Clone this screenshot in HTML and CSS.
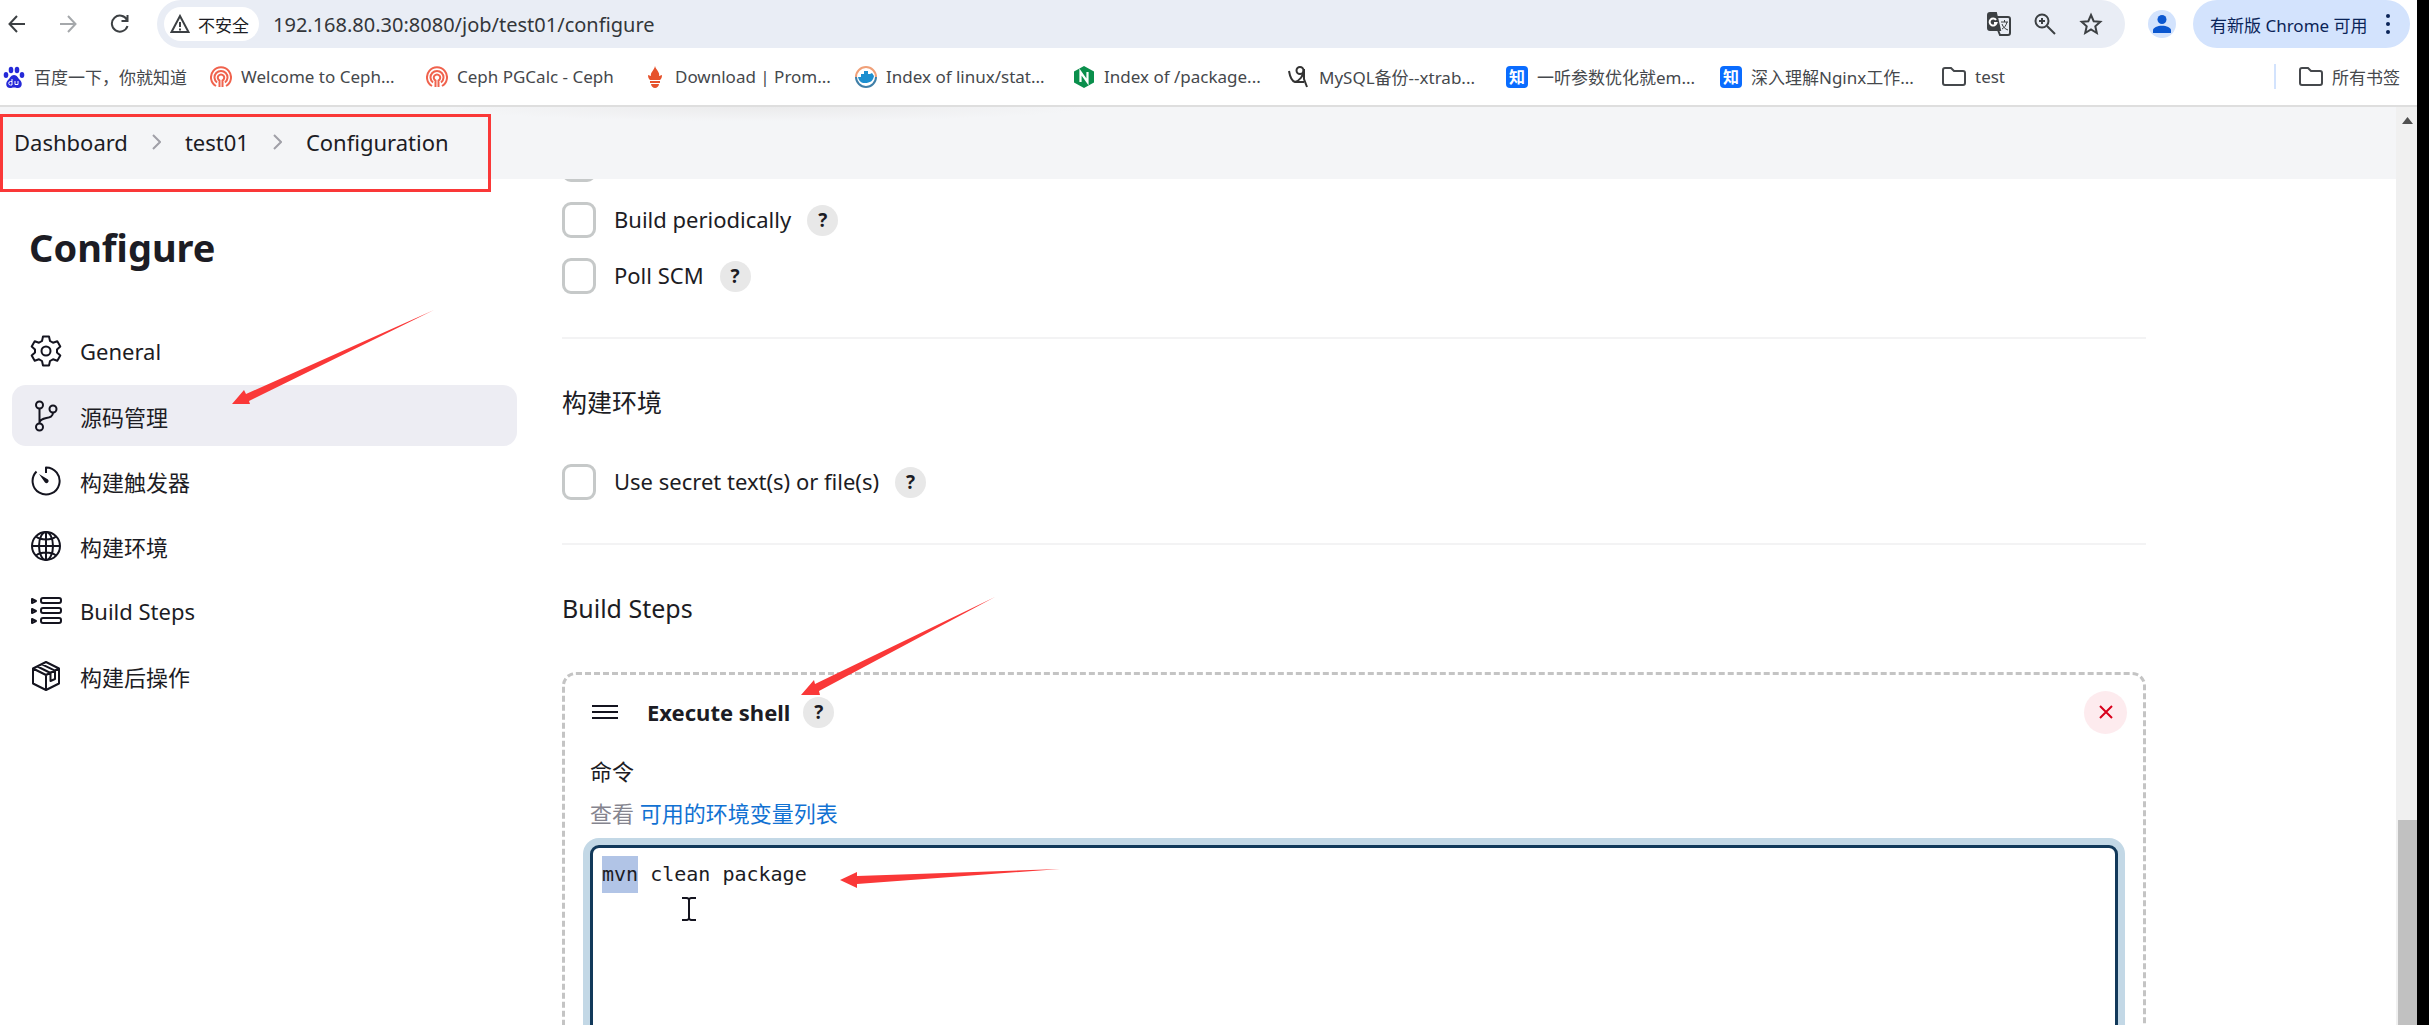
FILE: index.html
```
<!DOCTYPE html>
<html lang="zh-CN">
<head>
    <meta charset="UTF-8">
    <meta name="viewport" content="width=device-width, initial-scale=1.0">
    <title>test01 Config [Jenkins]</title>
    <link rel="stylesheet" href="styles.css">
</head>
<body>
    <div class="window">
        <header class="toolbar">
            <div class="nav">
                <button class="iconBtn" aria-label="Back"><svg width="18" height="20" viewBox="0 0 18 20"><path d="M9 2 1.500 10 9 18M2 10h15" /></svg></button>
                <button class="iconBtn forward" aria-label="Forward"><svg width="18" height="20" viewBox="0 0 18 20"><path d="M9 2l7.500 8L9 18M1 10h15" /></svg></button>
                <button class="iconBtn" aria-label="Reload"><svg width="20" height="20" viewBox="0 0 20 20"><path d="M17 6A8 8 0 1 0 17.500 12M17.500 1v6h-6" /></svg></button>
            </div>
            <div class="omnibox">
                <button class="security">
                    <svg width="20" height="20" viewBox="0 0 20 20"><path d="M10 2 1.500 18h17zM10 8v5M10 14.500v2" /></svg>
                    不安全
                </button>
                <input class="url" type="text" aria-label="URL" value="192.168.80.30:8080/job/test01/configure">
                <button class="iconBtn" aria-label="Translate">
                    <svg width="24" height="24" viewBox="0 0 24 24"><path d="M9 5h12a2 2 0 0 1 2 2v14a2 2 0 0 1-2 2h-8l-2-5" /><path class="solid" d="M3 1h6l4 17H3a2 2 0 0 1-2-2V3a2 2 0 0 1 2-2z" /><path class="light" d="M9 8a3.500 3.500 0 1 0 .5 3H7" /><path class="thin" d="M14 10h7M17.500 8v2M20 10c-1 4-3 6-5 7M15 12c1 3 3 5 6 6" /></svg>
                </button>
                <button class="iconBtn" aria-label="Zoom">
                    <svg width="22" height="22" viewBox="0 0 22 22"><circle cx="8" cy="8" r="6.500" /><path d="M13 13l8 8M8 5v6M5 8h6" /></svg>
                </button>
                <button class="iconBtn" aria-label="Bookmark">
                    <svg width="24" height="24" viewBox="0 0 24 24"><path d="M12 3l2.700 6.200 6.600.6-5 4.500 1.500 6.700-5.800-3.500L6.200 21l1.500-6.700-5-4.500 6.600-.6z" /></svg>
                </button>
            </div>
            <button class="profile" aria-label="Profile">
                <svg width="18" height="18" viewBox="0 0 20 20"><circle cx="10" cy="5" r="5" /><path d="M0 20v-3c0-3 5-5 10-5s10 2 10 5v3z" /></svg>
            </button>
            <button class="update">
                有新版 Chrome 可用
                <svg width="6" height="20" viewBox="0 0 6 20"><circle cx="3" cy="2" r="2" /><circle cx="3" cy="10" r="2" /><circle cx="3" cy="18" r="2" /></svg>
            </button>
        </header>

        <nav class="bookmarks">
            <a href="#">
                <svg width="22" height="22" viewBox="0 0 22 22" fill="#2529d8"><ellipse cx="3" cy="9" rx="2.300" ry="3" /><ellipse cx="8" cy="4" rx="2.300" ry="3.200" /><ellipse cx="14" cy="4" rx="2.300" ry="3.200" /><ellipse cx="19" cy="9" rx="2.300" ry="3" /><path d="M11 9c3 0 4 3 6 5 3 3 2 8-2 8-2 0-2-.5-4-.5s-2 .5-4 .5c-4 0-5-5-2-8 2-2 3-5 6-5z" /><path d="M9 13v6H7.500a1.500 1.500 0 0 1 0-3.500H9M12 15v3.500h3V15" fill="none" stroke="#fff" /></svg>
                <span>百度一下，你就知道</span>
            </a>
            <a href="#">
                <svg class="ceph" width="22" height="22" viewBox="0 0 22 22"><path d="M6 20a10 10 0 1 1 10 0M7 16.500a6.500 6.500 0 1 1 8 0M9.500 21v-6.500a3.200 3.200 0 1 1 3 0V21" /></svg>
                <span>Welcome to Ceph...</span>
            </a>
            <a href="#">
                <svg class="ceph" width="22" height="22" viewBox="0 0 22 22"><path d="M6 20a10 10 0 1 1 10 0M7 16.500a6.500 6.500 0 1 1 8 0M9.500 21v-6.500a3.200 3.200 0 1 1 3 0V21" /></svg>
                <span>Ceph PGCalc - Ceph</span>
            </a>
            <a href="#">
                <svg width="22" height="22" viewBox="0 0 22 22" fill="#e6522c"><path d="M11 0c1 4 5 6 4 10l3-1c0 3-1 4-2 5H6c-1-1-2-2-2-5l3 1C6 6 10 5 11 0zM6 15h10v2H6zM7 18h8c0 2-2 4-4 4s-4-2-4-4z" /></svg>
                <span>Download | Prom...</span>
            </a>
            <a href="#">
                <svg width="22" height="22" viewBox="0 0 22 22" fill="none" stroke-width="2"><path d="M1 11a10 10 0 0 1 20 0" stroke="#f0a078" /><path d="M1 11a10 10 0 0 0 20 0" stroke="#3f7fa8" /><path d="M3 11h3V8h3V5h4v3h2l2-1 2 3c-1 5-4 7-9 7-4 0-6-2-7-6z" fill="#1d8fd0" /></svg>
                <span>Index of linux/stat...</span>
            </a>
            <a href="#">
                <svg width="22" height="22" viewBox="0 0 22 22"><path d="M11 0l10 5.500v11L11 22 1 16.500v-11z" fill="#0a8f4c" /><path d="M7.500 16V6l7 10V6" fill="none" stroke="#fff" stroke-width="2.200" /></svg>
                <span>Index of /package...</span>
            </a>
            <a href="#">
                <svg width="22" height="22" viewBox="0 0 22 22" fill="none" stroke="#333" stroke-width="2"><circle cx="12" cy="4.500" r="3.500" /><path d="M1 5c1 6 3 10 6 11 4-1 9-6 9-13v10l3 8M7 16h9" /></svg>
                <span>MySQL备份--xtrab...</span>
            </a>
            <a href="#">
                <b class="zhihu">知</b>
                <span>一听参数优化就em...</span>
            </a>
            <a href="#">
                <b class="zhihu">知</b>
                <span>深入理解Nginx工作...</span>
            </a>
            <a href="#">
                <svg class="folder" width="24" height="20" viewBox="0 0 24 20"><path d="M1 3a2 2 0 0 1 2-2h6l3 3h9a2 2 0 0 1 2 2v10a2 2 0 0 1-2 2H3a2 2 0 0 1-2-2z" /></svg>
                <span>test</span>
            </a>
            <a href="#" class="allMarks">
                <svg class="folder" width="24" height="20" viewBox="0 0 24 20"><path d="M1 3a2 2 0 0 1 2-2h6l3 3h9a2 2 0 0 1 2 2v10a2 2 0 0 1-2 2H3a2 2 0 0 1-2-2z" /></svg>
                <span>所有书签</span>
            </a>
        </nav>

        <div class="viewport">
            <div class="page">
                <nav class="breadcrumbs">
                    <a href="#">Dashboard</a>
                    <svg width="9" height="16" viewBox="0 0 9 16"><path d="M1 1l7 7-7 7" /></svg>
                    <a href="#">test01</a>
                    <svg width="9" height="16" viewBox="0 0 9 16"><path d="M1 1l7 7-7 7" /></svg>
                    <a href="#">Configuration</a>
                </nav>
                <div class="redBox"></div>

                <div class="columns">
                    <aside class="sidebar">
                        <h1>Configure</h1>
                        <a href="#" class="task">
                            <svg width="32" height="32" viewBox="0 0 32 32"><path d="M13 1.500h6l1 4.500 3 1.700 4.300-1.400 3 5.200-3.300 3v3l3.300 3-3 5.200L23 24.300 20 26l-1 4.500h-6L12 26l-3-1.700-4.300 1.400-3-5.200 3.300-3v-3l-3.300-3 3-5.200L9 7.700 12 6z" /><circle cx="16" cy="16" r="4.500" /></svg>
                            General
                        </a>
                        <a href="#" class="task active">
                            <svg width="32" height="32" viewBox="0 0 32 32"><circle cx="9.500" cy="5" r="3.500" /><circle cx="23" cy="9" r="3.500" /><circle cx="9.500" cy="27" r="3.500" /><path d="M9.500 8.500v15M23 12.500c0 8-12 3-13.500 10" /></svg>
                            源码管理
                        </a>
                        <a href="#" class="task">
                            <svg width="32" height="32" viewBox="0 0 32 32"><path d="M16 8V2.500a13.500 13.500 0 1 1-9.500 4" /><path class="solid" d="M9 9l9 5.500a2 2 0 0 1-3 3z" /></svg>
                            构建触发器
                        </a>
                        <a href="#" class="task">
                            <svg width="32" height="32" viewBox="0 0 32 32"><circle cx="16" cy="16" r="14" /><ellipse cx="16" cy="16" rx="7" ry="14" /><path d="M16 2v28M2 16h28M6 6.500c5 4 15 4 20 0M6 25.500c5-4 15-4 20 0" /></svg>
                            构建环境
                        </a>
                        <a href="#" class="task">
                            <svg width="32" height="32" viewBox="0 0 32 32"><path d="M2 4v4l4-2zM2 14v4l4-2zM2 24v4l4-2z" /><rect x="11" y="3" width="20" height="5" rx="2" /><rect x="11" y="13" width="20" height="5" rx="2" /><rect x="11" y="23" width="20" height="5" rx="2" /></svg>
                            Build Steps
                        </a>
                        <a href="#" class="task">
                            <svg width="32" height="32" viewBox="0 0 32 32"><path d="M16 2l13 6.500v15L16 30 3 23.500v-15zM3 8.500L16 15l13-6.500M16 15v15M7.500 6.500l13 6.500M12 4.300l13 6.400M20.500 13v8l4.500-2v-8" /></svg>
                            构建后操作
                        </a>
                        <svg class="arrow arrowSource" width="202" height="94" viewBox="0 0 202 94"><path d="M0 94l12-14 2 4L202 0 17 91l1 3z" /></svg>
                    </aside>

                    <main class="content">
                        <div class="row">
                            <input type="checkbox" aria-label="Build trigger">
                        </div>
                        <div class="row">
                            <input type="checkbox" id="periodic">
                            <label for="periodic">Build periodically</label>
                            <button class="help">?</button>
                        </div>
                        <div class="row">
                            <input type="checkbox" id="scm">
                            <label for="scm">Poll SCM</label>
                            <button class="help">?</button>
                        </div>

                        <hr>
                        <h2 class="sectionTitle">构建环境</h2>
                        <div class="row rowSecret">
                            <input type="checkbox" id="secret">
                            <label for="secret">Use secret text(s) or file(s)</label>
                            <button class="help">?</button>
                        </div>

                        <hr>
                        <h2 class="sectionTitle">Build Steps</h2>
                        <section class="step">
                            <div class="stepHead">
                                <svg width="26" height="16" viewBox="0 0 26 16"><path d="M0 2h26M0 8h26M0 14h26" /></svg>
                                <b>Execute shell</b>
                                <button class="help">?</button>
                                <button class="remove" aria-label="Delete"><svg width="14" height="14" viewBox="0 0 14 14"><path d="M1 1l12 12M13 1 1 13" /></svg></button>
                            </div>
                            <label class="cmdLabel" for="command">命令</label>
                            <p class="hint">查看 <a href="#">可用的环境变量列表</a></p>
                            <textarea id="command" spellcheck="false">mvn clean package</textarea>
                            <svg class="arrow arrowShell" width="194" height="98" viewBox="0 0 194 98"><path d="M0 98l13-15 1 4L194 0 18 94l1 4z" /></svg>
                            <svg class="arrow arrowCommand" width="220" height="20" viewBox="0 0 220 20"><path d="M0 11L17 3v4L220 0 17 15v4z" /></svg>
                            <svg class="ibeam" width="14" height="24" viewBox="0 0 14 24"><path d="M0 1h5l2 1 2-1h5M7 2v20M0 23h5l2-1 2 1h5" /></svg>
                        </section>
                    </main>
                </div>
            </div>
            <div class="scrollbar">
                <svg width="11" height="7" viewBox="0 0 11 7"><path d="M0 7l5.500-7L11 7z" /></svg>
                <div class="thumb"></div>
            </div>
        </div>
    </div>

    <script>
        const command = document.getElementById("command");
        command.focus({ preventScroll: true });
        command.setSelectionRange(0, 3);
    </script>
</body>
</html>
```
FILE: styles.css
```
*{
    box-sizing: border-box;
}
body{
    margin: 0;
    height: 100vh;
    overflow: hidden;
    background: black;
    color: #1c1c24;
    font-family: "Noto Sans", "Noto Sans CJK SC", sans-serif;
}
a{
    color: inherit;
    text-decoration: none;
}
button{
    border: none;
    padding: 0;
    background: none;
    font-family: inherit;
    color: inherit;
}
svg{
    flex: none;
}
.window{
    display: flex;
    flex-direction: column;
    height: 100vh;
    margin-right: 12px;
    background: #fff;
}

/* browser toolbar */
.toolbar{
    display: flex;
    align-items: center;
    height: 48px;
    padding-right: 7px;
}
.nav{
    display: flex;
    gap: 33px;
    width: 157px;
    padding-left: 8px;
}
.iconBtn{
    display: flex;
}
.iconBtn svg, .security svg{
    fill: none;
    stroke: #3c4043;
    stroke-width: 2;
}
.nav .forward svg{
    stroke: #a5a8ab;
}
.iconBtn .solid{
    fill: #3c4043;
}
.iconBtn .light{
    stroke: #fff;
}
.iconBtn .thin{
    stroke-width: 1;
}
.omnibox{
    display: flex;
    flex: 1;
    align-items: center;
    gap: 23px;
    height: 48px;
    padding: 0 22px 0 7px;
    border-radius: 24px;
    background: #e9edf5;
}
.security{
    display: flex;
    align-items: center;
    gap: 8px;
    height: 34px;
    padding: 0 10px 0 6px;
    border-radius: 17px;
    background: #fff;
    font-size: 17px;
}
.url{
    flex: 1;
    min-width: 0;
    margin-left: -9px;
    padding: 0;
    border: none;
    background: none;
    font-family: inherit;
    font-size: 20px;
    color: #33363a;
}
.profile{
    display: flex;
    align-items: center;
    justify-content: center;
    width: 28px;
    height: 28px;
    margin: 0 17px 0 23px;
    border-radius: 50%;
    background: #d3e3fd;
}
.profile svg{
    fill: #0b57d0;
}
.update{
    display: flex;
    align-items: center;
    justify-content: space-between;
    width: 217px;
    height: 48px;
    padding: 0 19px 0 17px;
    border-radius: 24px;
    background: #d3e3fd;
    font-size: 17px;
    color: #0a2458;
    white-space: nowrap;
}
.update svg{
    fill: #0a2458;
}

/* bookmarks bar */
.bookmarks{
    display: grid;
    grid-template-columns: 207px 216px 218px 211px 218px 215px 218px 214px 222px 1fr auto;
    align-items: center;
    height: 59px;
    padding: 0 17px 0 3px;
    border-bottom: 2px solid #dedede;
    font-size: 17px;
    color: #45484c;
    white-space: nowrap;
}
.bookmarks a{
    display: flex;
    align-items: center;
    gap: 9px;
}
.ceph{
    fill: none;
    stroke: #f0624d;
    stroke-width: 2;
}
.folder{
    fill: none;
    stroke: #45484c;
    stroke-width: 2;
}
.zhihu{
    width: 22px;
    height: 22px;
    border-radius: 4px;
    background: #0a6cff;
    color: #fff;
    font-size: 16px;
    line-height: 22px;
    text-align: center;
}
.bookmarks .allMarks{
    padding-left: 23px;
    border-left: 2px solid #d3e3fd;
}

/* page */
.viewport{
    display: flex;
    flex: 1;
    min-height: 0;
}
.page{
    position: relative;
    flex: 1;
    overflow: hidden;
}
.breadcrumbs{
    position: relative;
    z-index: 1;
    display: flex;
    align-items: center;
    gap: 24px;
    height: 72px;
    padding: 0 0 2px 14px;
    background: radial-gradient(ellipse at 32% 0, #ebebec, #f4f5f7 14%);
    font-size: 22px;
}
.breadcrumbs svg{
    fill: none;
    stroke: #a0a0a8;
    stroke-width: 2;
}
.redBox{
    position: absolute;
    z-index: 2;
    top: 7px;
    left: 0;
    width: 491px;
    height: 78px;
    border: 3px solid #fa3838;
}
.columns{
    display: flex;
}
.sidebar{
    position: relative;
    width: 562px;
    padding: 43px 45px 0 12px;
}
.sidebar h1{
    margin: 0 0 48px;
    padding-left: 17px;
    font-size: 38px;
    line-height: 50px;
}
.task{
    display: flex;
    align-items: center;
    gap: 18px;
    height: 61px;
    margin-top: 4px;
    padding-left: 18px;
    border-radius: 14px;
    font-size: 22px;
}
.task svg{
    fill: none;
    stroke: #14141f;
    stroke-width: 2;
    stroke-linejoin: round;
}
.task .solid{
    fill: #14141f;
    stroke: none;
}
.active{
    background: #ededf3;
}

.content{
    flex: 1;
    max-width: 1584px;
    margin-top: -43px;
}
.row{
    display: flex;
    align-items: center;
    height: 56px;
    font-size: 22px;
}
.row input{
    appearance: none;
    width: 34px;
    height: 36px;
    margin: 0 18px 0 0;
    border: 3px solid #c6c9c9;
    border-radius: 9px;
    background: #fff;
}
.row label{
    padding: 0 3px 2px 0;
}
.help{
    width: 31px;
    height: 31px;
    margin-left: 13px;
    border-radius: 50%;
    background: #e8e8e8;
    font-size: 19px;
    font-weight: bold;
    line-height: 31px;
}
hr{
    height: 2px;
    margin: 33px 0 48px;
    border: none;
    background: #f3f3f4;
}
.sectionTitle{
    margin: 0;
    font-size: 25px;
    font-weight: normal;
    line-height: 30px;
}
.rowSecret{
    margin-top: 37px;
}
.step{
    position: relative;
    height: 600px;
    margin-top: 49px;
    padding: 15px 25px;
    border: 3px dashed #c4c4c4;
    border-radius: 14px;
}
.stepHead{
    display: flex;
    align-items: center;
    height: 44px;
    margin-right: -9px;
    padding-left: 2px;
    font-size: 22px;
}
.stepHead svg{
    fill: none;
    stroke: #14141f;
    stroke-width: 2;
}
.stepHead b{
    margin-left: 29px;
}
.remove{
    display: flex;
    align-items: center;
    justify-content: center;
    width: 43px;
    height: 43px;
    margin-left: auto;
    border-radius: 50%;
    background: #fdebee;
}
.remove svg{
    stroke: #d8001b;
}
.cmdLabel{
    display: block;
    margin-top: 22px;
    font-size: 22px;
    line-height: 30px;
}
.hint{
    margin: 12px 0 17px;
    font-size: 22px;
    line-height: 30px;
    color: #85858f;
}
.hint a{
    color: #1272d3;
}
textarea{
    display: block;
    width: 100%;
    height: 400px;
    padding: 8px 9px;
    border: 3px solid #12395a;
    border-radius: 9px;
    outline: none;
    box-shadow: 0 0 0 7px #c3d8e6;
    resize: none;
    font-family: "DejaVu Sans Mono", monospace;
    font-size: 20px;
    line-height: 37px;
    color: #1c1c24;
    caret-color: transparent;
}
textarea::selection{
    background: #b1c4e6;
}

/* pointer and red arrows */
.arrow{
    position: absolute;
    z-index: 2;
    fill: #fa3838;
}
.sidebar .arrowSource{
    top: 131px;
    left: 232px;
}
.arrowShell{
    top: -78px;
    left: 236px;
}
.arrowCommand{
    top: 194px;
    left: 275px;
}
.ibeam{
    position: absolute;
    top: 222px;
    left: 117px;
    fill: none;
    stroke: #14141f;
    stroke-width: 2;
}

.scrollbar{
    display: flex;
    flex-direction: column;
    align-items: center;
    justify-content: space-between;
    width: 21px;
    padding: 10px 0 0 2px;
    background: #f0f0f0;
}
.scrollbar svg{
    fill: #505050;
}
.thumb{
    width: 100%;
    height: 205px;
    background: #c1c1c1;
}
```
